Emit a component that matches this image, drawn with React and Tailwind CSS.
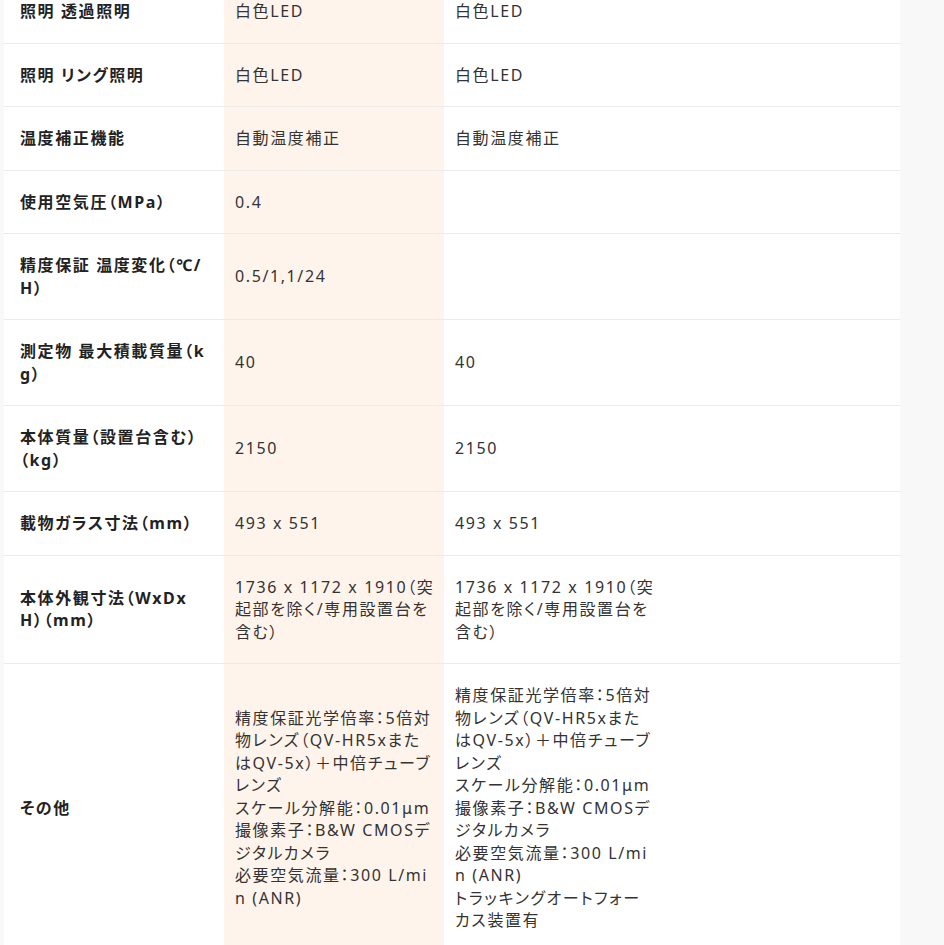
import React from "react";

const rows = [
  ["照明 透過照明", "白色LED", "白色LED"],
  ["照明 リング照明", "白色LED", "白色LED"],
  ["温度補正機能", "自動温度補正", "自動温度補正"],
  ["使用空気圧（MPa）", "0.4", ""],
  ["精度保証 温度変化（℃/H）", "0.5/1,1/24", ""],
  ["測定物 最大積載質量（kg）", "40", "40"],
  ["本体質量（設置台含む）（kg）", "2150", "2150"],
  ["載物ガラス寸法（mm）", "493 x 551", "493 x 551"],
  [
    "本体外観寸法（WxDxH）（mm）",
    "1736 x 1172 x 1910（突起部を除く/専用設置台を含む）",
    "1736 x 1172 x 1910（突起部を除く/専用設置台を含む）",
  ],
  [
    "その他",
    [
      "精度保証光学倍率：5倍対物レンズ（QV-HR5xまたはQV-5x）＋中倍チューブレンズ",
      "スケール分解能：0.01μm",
      "撮像素子：B&W CMOSデジタルカメラ",
      "必要空気流量：300 L/min (ANR)",
    ],
    [
      "精度保証光学倍率：5倍対物レンズ（QV-HR5xまたはQV-5x）＋中倍チューブレンズ",
      "スケール分解能：0.01μm",
      "撮像素子：B&W CMOSデジタルカメラ",
      "必要空気流量：300 L/min (ANR)",
      "トラッキングオートフォーカス装置有",
    ],
  ],
];

function Val({ v }) {
  if (Array.isArray(v)) {
    return v.map((line, i) => <div key={i}>{line}</div>);
  }
  return v;
}

export default function App() {
  return (
    <div className="min-h-screen bg-[#f8f8f8] overflow-hidden">
      <div className="ml-[4px] w-[896px] bg-white">
        <table
          className="-mt-[20px] w-full table-fixed border-collapse text-[16px] leading-[22.5px] tracking-[0.1em] [font-feature-settings:'palt'] break-all"
          style={{ fontFamily: '"Noto Sans", "Noto Sans CJK JP", sans-serif' }}
        >
          <colgroup>
            <col className="w-[220px]" />
            <col className="w-[220px]" />
            <col className="w-[220px]" />
            <col />
          </colgroup>
          <tbody>
            {rows.map((r, i) => (
              <tr key={i} className="border-b border-[#ebebeb]">
                <th className="py-5 pl-[16px] pr-[17px] text-left align-middle font-bold text-[#222]">
                  {r[0]}
                </th>
                <td className="py-5 pl-[11px] pr-[9px] align-middle bg-[#fff4ec] text-[#333]">
                  <Val v={r[1]} />
                </td>
                <td className="py-5 pl-[11px] pr-[9px] align-middle text-[#333]">
                  <Val v={r[2]} />
                </td>
                <td />
              </tr>
            ))}
          </tbody>
        </table>
      </div>
    </div>
  );
}
